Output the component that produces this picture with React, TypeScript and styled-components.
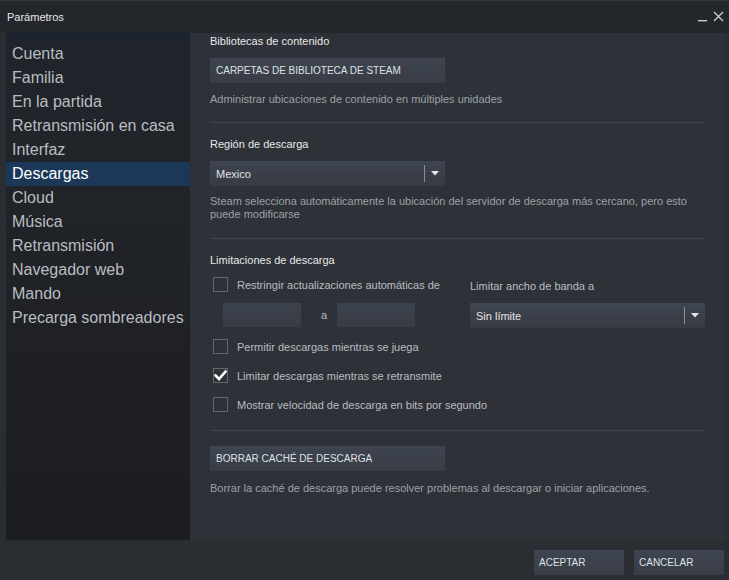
import React from "react";
import styled, { createGlobalStyle } from "styled-components";

const Global = createGlobalStyle`
  html, body { margin: 0; padding: 0; background: #2a2d32; }
  body { font-family: Arial, "Liberation Sans", sans-serif; }
  * { box-sizing: border-box; }
`;

const Window = styled.div`
  width: 729px;
  height: 580px;
  background: #2a2d32;
  display: flex;
  flex-direction: column;
  overflow: hidden;
`;

const TitleBar = styled.div`
  height: 33px;
  flex: none;
  background: #23262b;
  border-top: 1px solid #34373d;
  display: flex;
  align-items: center;
  padding: 0 5px 0 7px;
`;

const Title = styled.div`
  flex: 1;
  font-size: 11px;
  color: #e6e7e8;
  line-height: 14px;
  margin-top: -1px;
`;

const WinButtons = styled.div`
  display: flex;
  align-items: center;
  gap: 5px;
  margin-top: -2px;
`;

const Body = styled.div`
  flex: 1;
  display: flex;
  padding: 0 4px 0 6px;
  min-height: 0;
`;

const Nav = styled.nav`
  width: 184px;
  flex: none;
  padding-top: 9px;
  background: linear-gradient(
    to bottom,
    #1b2230 0px,
    #20242b 14px,
    #212429 120px,
    #1f2125 300px,
    #1b1d20 100%
  );
`;

const NavItem = styled.div<{ $active?: boolean }>`
  height: 24px;
  line-height: 24px;
  padding-left: 6px;
  font-size: 16px;
  color: ${(p) => (p.$active ? "#ffffff" : "#b9bdc1")};
  background: ${(p) => (p.$active ? "#1b3858" : "transparent")};
  white-space: nowrap;
`;

const Content = styled.div`
  flex: 1;
  background: #2e3137;
  padding: 0 20px;
  display: flex;
  flex-direction: column;
  color: #b9bdc1;
  font-size: 11px;
`;

const Header = styled.div<{ $mt?: number }>`
  font-size: 11px;
  line-height: 16px;
  color: #e8e9ea;
  margin-top: ${(p) => p.$mt ?? 0}px;
`;

const Button = styled.div<{ $mt?: number }>`
  width: 235px;
  height: 25px;
  margin-top: ${(p) => p.$mt ?? 0}px;
  background: linear-gradient(to bottom, #3f4551 0%, #373c45 100%);
  color: #dfe1e3;
  font-size: 10px;
  line-height: 25px;
  padding-left: 6px;
  text-transform: uppercase;
  white-space: nowrap;
`;

const Desc = styled.div<{ $mt?: number }>`
  margin-top: ${(p) => p.$mt ?? 0}px;
  font-size: 11px;
  line-height: 13px;
  color: #9ba1a8;
`;

const Divider = styled.div<{ $mt?: number }>`
  height: 1px;
  margin-top: ${(p) => p.$mt ?? 0}px;
  background: #41444b;
`;

const Select = styled.div<{ $mt?: number; $w?: number }>`
  width: ${(p) => p.$w ?? 235}px;
  height: 25px;
  margin-top: ${(p) => p.$mt ?? 0}px;
  background: linear-gradient(to bottom, #3f4551 0%, #353a43 100%);
  display: flex;
  align-items: center;
  padding-left: 6px;
  color: #e2e3e5;
  font-size: 11px;
`;

const SelectLabel = styled.span`
  flex: 1;
`;

const SelectSep = styled.span`
  width: 1px;
  height: 17px;
  background: #8a9098;
`;

const SelectArrow = styled.span`
  width: 20px;
  display: flex;
  justify-content: center;
  align-items: center;
`;

const LimitsGrid = styled.div`
  display: grid;
  grid-template-columns: 260px 235px;
  margin-top: 9px;
`;

const LeftCol = styled.div`
  display: flex;
  flex-direction: column;
`;

const RightCol = styled.div`
  display: flex;
  flex-direction: column;
  padding-top: 2px;
`;

const SmallLabel = styled.div`
  font-size: 11px;
  line-height: 14px;
  color: #b9bdc1;
`;

const CheckRow = styled.div<{ $mt?: number }>`
  display: flex;
  align-items: center;
  gap: 9px;
  padding-left: 3px;
  height: 15px;
  margin-top: ${(p) => p.$mt ?? 0}px;
  font-size: 11px;
  color: #b9bdc1;
  white-space: nowrap;
`;

const Box = styled.span`
  width: 15px;
  height: 15px;
  flex: none;
  border: 1px solid #62666d;
  display: flex;
  align-items: center;
  justify-content: center;
`;

const TimeRow = styled.div`
  display: flex;
  align-items: center;
  margin-top: 11px;
  padding-left: 13px;
`;

const TimeInput = styled.div`
  width: 78px;
  height: 24px;
  background: linear-gradient(to bottom, #3d434e 0%, #363b44 100%);
`;

const TimeSep = styled.span`
  width: 36px;
  padding-left: 10px;
  text-align: center;
  font-size: 11px;
  color: #b9bdc1;
`;

const Footer = styled.div`
  height: 40px;
  flex: none;
  display: flex;
  justify-content: flex-end;
  gap: 10px;
  padding: 10px 5px 0 0;
`;

const FooterButton = styled.div`
  width: 90px;
  height: 25px;
  background: linear-gradient(to bottom, #3f4551 0%, #383d46 100%);
  color: #dfe1e3;
  font-size: 10px;
  line-height: 25px;
  padding-left: 5px;
`;

const Arrow = () => (
  <svg width="8" height="5" viewBox="0 0 8 5">
    <path d="M0 0 H8 L4 4.5 Z" fill="#e6e7e8" />
  </svg>
);

const Check = () => (
  <svg width="13" height="13" viewBox="0 0 13 13">
    <path
      d="M1.5 6.5 L5 10 L11.5 2.5"
      fill="none"
      stroke="#ffffff"
      strokeWidth="2.6"
      strokeLinecap="square"
    />
  </svg>
);

const navItems = [
  "Cuenta",
  "Familia",
  "En la partida",
  "Retransmisión en casa",
  "Interfaz",
  "Descargas",
  "Cloud",
  "Música",
  "Retransmisión",
  "Navegador web",
  "Mando",
  "Precarga sombreadores",
];

export default function App() {
  return (
    <>
      <Global />
      <Window>
        <TitleBar>
          <Title>Parámetros</Title>
          <WinButtons>
            <svg width="10" height="12" viewBox="0 0 10 12">
              <rect x="0" y="10" width="9" height="1.4" fill="#c9cbcd" />
            </svg>
            <svg width="11" height="11" viewBox="0 0 11 11">
              <path d="M1 1 L10 10 M10 1 L1 10" stroke="#c9cbcd" strokeWidth="1.4" />
            </svg>
          </WinButtons>
        </TitleBar>
        <Body>
          <Nav>
            {navItems.map((n) => (
              <NavItem key={n} $active={n === "Descargas"}>
                {n}
              </NavItem>
            ))}
          </Nav>
          <Content>
            <Header>Bibliotecas de contenido</Header>
            <Button $mt={9}>Carpetas de biblioteca de Steam</Button>
            <Desc $mt={10}>Administrar ubicaciones de contenido en múltiples unidades</Desc>
            <Divider $mt={16} />
            <Header $mt={13}>Región de descarga</Header>
            <Select $mt={9}>
              <SelectLabel>Mexico</SelectLabel>
              <SelectSep />
              <SelectArrow>
                <Arrow />
              </SelectArrow>
            </Select>
            <Desc $mt={9}>
              Steam selecciona automáticamente la ubicación del servidor de descarga más cercano, pero esto
              puede modificarse
            </Desc>
            <Divider $mt={17} />
            <Header $mt={13}>Limitaciones de descarga</Header>
            <LimitsGrid>
              <LeftCol>
                <CheckRow>
                  <Box />
                  Restringir actualizaciones automáticas de
                </CheckRow>
                <TimeRow>
                  <TimeInput />
                  <TimeSep>a</TimeSep>
                  <TimeInput />
                </TimeRow>
              </LeftCol>
              <RightCol>
                <SmallLabel>Limitar ancho de banda a</SmallLabel>
                <Select $mt={10}>
                  <SelectLabel>Sin límite</SelectLabel>
                  <SelectSep />
                  <SelectArrow>
                    <Arrow />
                  </SelectArrow>
                </Select>
              </RightCol>
            </LimitsGrid>
            <CheckRow $mt={11}>
              <Box />
              Permitir descargas mientras se juega
            </CheckRow>
            <CheckRow $mt={14}>
              <Box>
                <Check />
              </Box>
              Limitar descargas mientras se retransmite
            </CheckRow>
            <CheckRow $mt={14}>
              <Box />
              Mostrar velocidad de descarga en bits por segundo
            </CheckRow>
            <Divider $mt={18} />
            <Button $mt={15}>Borrar caché de descarga</Button>
            <Desc $mt={11}>
              Borrar la caché de descarga puede resolver problemas al descargar o iniciar aplicaciones.
            </Desc>
          </Content>
        </Body>
        <Footer>
          <FooterButton>ACEPTAR</FooterButton>
          <FooterButton>CANCELAR</FooterButton>
        </Footer>
      </Window>
    </>
  );
}
